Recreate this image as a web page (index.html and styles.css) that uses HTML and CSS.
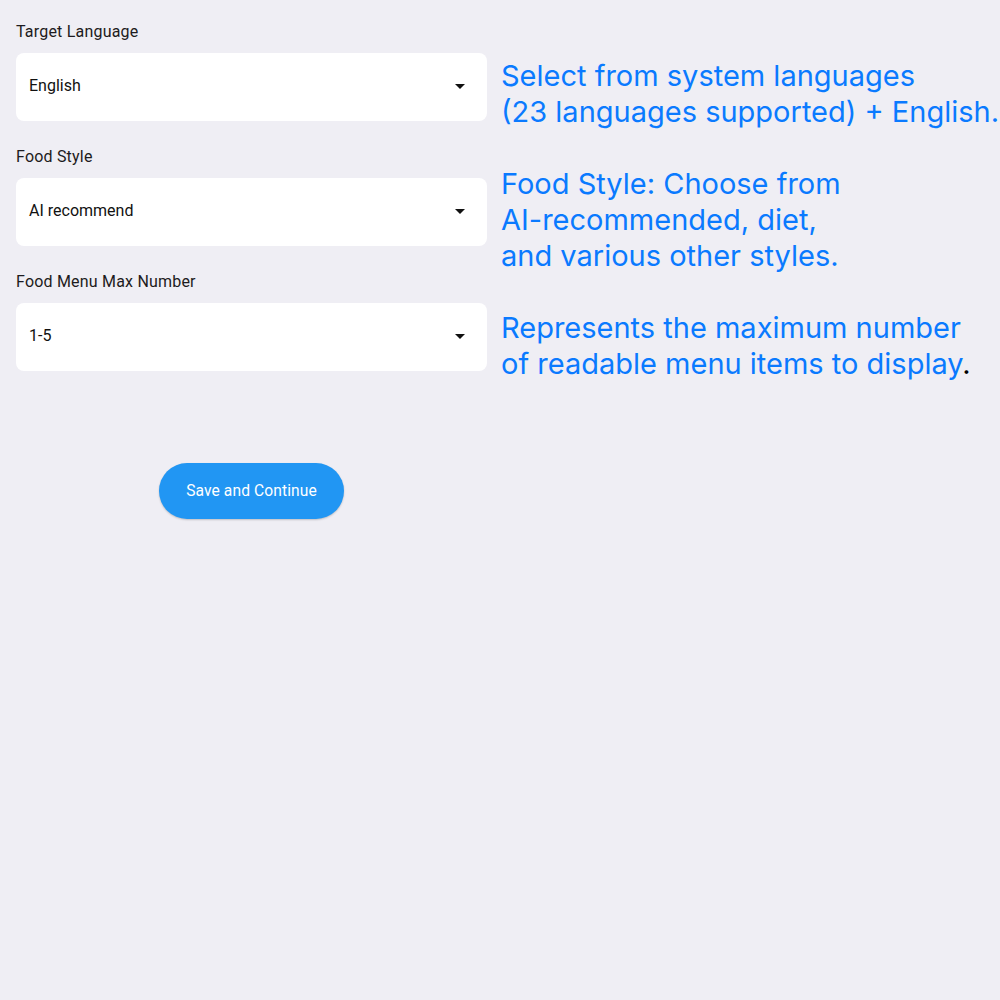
FILE: index.html
```html
<!DOCTYPE html>
<html lang="en">
<head>
<meta charset="utf-8">
<title>Settings</title>
<link rel="stylesheet" href="styles.css">
</head>
<body>
<div class="page">
  <div class="form">
    <div class="field">
      <div class="label">Target Language</div>
      <div class="select">
        <span class="value">English</span>
        <svg class="arrow" viewBox="0 0 24 24" width="24" height="24"><path d="M7 10l5 5 5-5z"/></svg>
      </div>
    </div>
    <div class="field">
      <div class="label">Food Style</div>
      <div class="select">
        <span class="value">AI recommend</span>
        <svg class="arrow" viewBox="0 0 24 24" width="24" height="24"><path d="M7 10l5 5 5-5z"/></svg>
      </div>
    </div>
    <div class="field">
      <div class="label">Food Menu Max Number</div>
      <div class="select">
        <span class="value">1-5</span>
        <svg class="arrow" viewBox="0 0 24 24" width="24" height="24"><path d="M7 10l5 5 5-5z"/></svg>
      </div>
    </div>
    <div class="actions">
      <button class="save">Save and Continue</button>
    </div>
  </div>
  <div class="notes">
    <p class="note">Select from system languages<br>(23 languages supported) + English.</p>
    <p class="note">Food Style: Choose from<br>AI-recommended, diet,<br>and various other styles.</p>
    <p class="note">Represents the maximum number<br>of readable menu items to display<span class="dot">.</span></p>
  </div>
</div>
</body>
</html>
```
FILE: styles.css
```css
html, body {
  margin: 0;
  padding: 0;
  background: #efeef4;
}
body {
  width: 1000px;
  height: 1000px;
  overflow: hidden;
  font-family: Roboto, "Liberation Sans", sans-serif;
}
.page {
  display: flex;
  align-items: flex-start;
}
.form {
  width: 471px;
  margin-left: 16px;
  padding-top: 22px;
  display: flex;
  flex-direction: column;
}
.field {
  display: flex;
  flex-direction: column;
  gap: 11px;
  margin-bottom: 26px;
}
.label {
  font-size: 16px;
  line-height: 20px;
  color: #1d1b20;
  letter-spacing: 0.2px;
}
.select {
  height: 68px;
  background: #ffffff;
  border-radius: 8px;
  display: flex;
  align-items: center;
  justify-content: space-between;
  padding: 0 15px 3px 13px;
  box-sizing: border-box;
}
.value {
  font-size: 16px;
  color: #111111;
}
.arrow {
  fill: #111111;
}
.actions {
  display: flex;
  justify-content: center;
  margin-top: 66px;
}
.save {
  width: 185px;
  height: 56px;
  border: none;
  border-radius: 28px;
  background: #2196f3;
  color: #ffffff;
  font-family: Roboto, "Liberation Sans", sans-serif;
  font-size: 15.6px;
  letter-spacing: 0.1px;
  box-shadow: 0 1px 2px rgba(0,0,0,0.2);
  cursor: pointer;
}
.notes {
  margin-left: 14px;
  padding-top: 22px;
}
.note {
  margin: 36px 0 0 0;
  font-family: Inter, "Noto Sans", sans-serif;
  font-size: 29px;
  line-height: 36px;
  color: #0a7aff;
  white-space: nowrap;
}
.dot {
  color: #000000;
}
```
